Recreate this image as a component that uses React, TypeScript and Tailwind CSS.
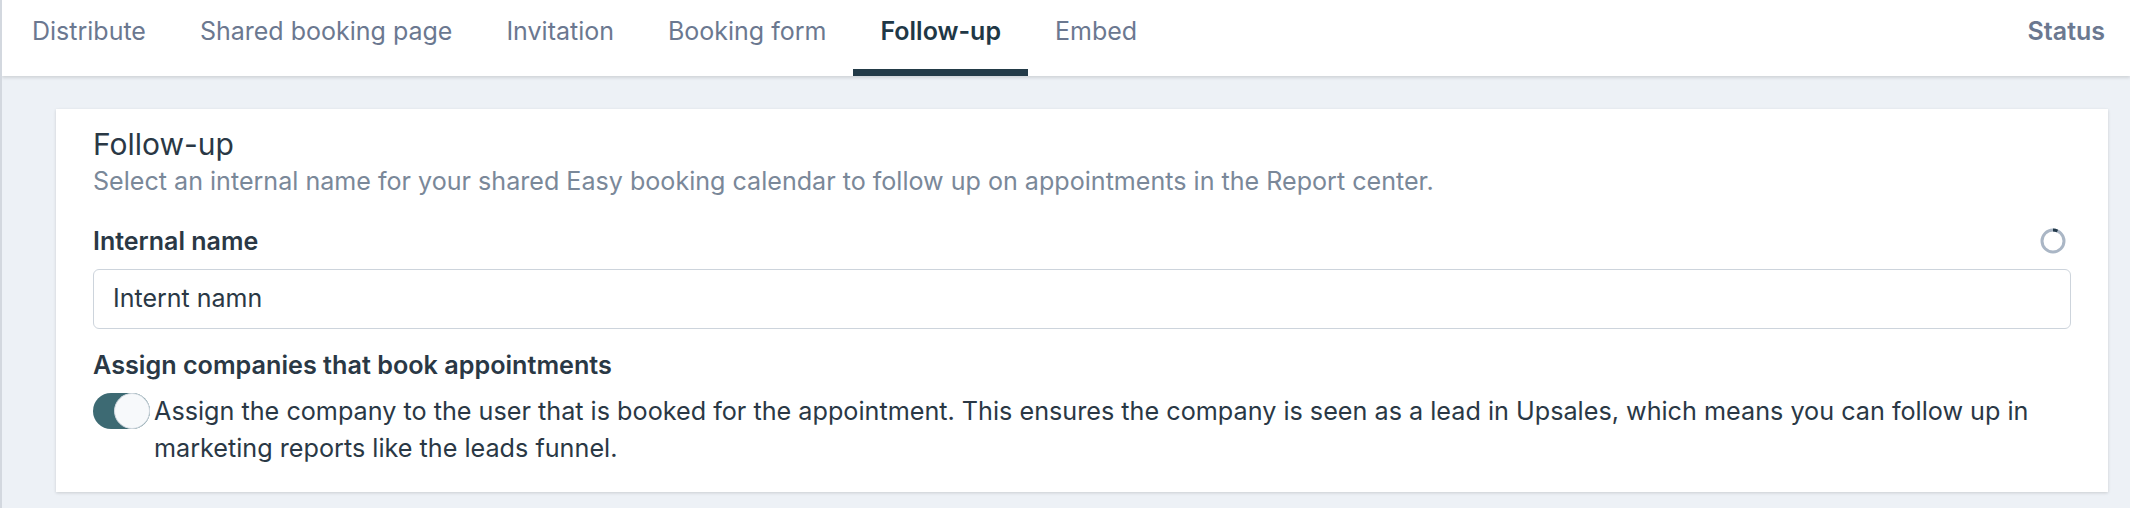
import React from 'react'

const tabs = ['Distribute', 'Shared booking page', 'Invitation', 'Booking form', 'Follow-up', 'Embed']

function Spinner() {
  return (
    <svg width="28" height="28" viewBox="0 0 28 28" className="block">
      <circle cx="14" cy="14" r="11" fill="none" stroke="#aab6c5" strokeWidth="3" />
      <path d="M14 3 A11 11 0 0 1 18.5 4" fill="none" stroke="#22394a" strokeWidth="3" />
    </svg>
  )
}

function Toggle() {
  return (
    <div className="relative h-[36px] w-[57px] shrink-0 rounded-full bg-[#3d6a73]">
      <div className="absolute right-0 top-0 h-[36px] w-[36px] rounded-full border border-[#d3dae1] bg-[#f7f9fb]" />
    </div>
  )
}

export default function App() {
  return (
    <div
      className="h-[508px] w-[2130px] overflow-hidden border-l-2 border-[#d3d8df] bg-[#edf1f6]"
      style={{ fontFamily: 'Inter, "Noto Sans", sans-serif' }}
    >
      {/* tab bar */}
      <div className="flex h-[76px] items-stretch bg-white pl-[3px] pr-[25px] shadow-[0_2px_3px_rgba(0,0,0,0.12)]">
        {tabs.map((t) => {
          const active = t === 'Follow-up'
          return (
            <div
              key={t}
              className={
                active
                  ? 'relative flex items-center px-[27px] pb-[12px] text-[25px] font-semibold text-[#1f3846]'
                  : 'relative flex items-center px-[27px] pb-[12px] text-[25px] text-[#6b7890]'
              }
            >
              {t}
              {active && <div className="absolute bottom-0 left-0 right-0 h-[7px] bg-[#233b48]" />}
            </div>
          )
        })}
        <div className="ml-auto flex items-center pb-[12px] text-[25px] font-semibold text-[#6b7890]">Status</div>
      </div>

      {/* card */}
      <div className="ml-[54px] mr-[22px] mt-[33px] bg-white px-[37px] pb-[25px] pt-[17px] shadow-[0_1px_3px_rgba(0,0,0,0.15)]">
        <h2 className="text-[30px] leading-[36px] text-[#2a3845]">Follow-up</h2>
        <p className="mt-[4px] text-[25.1px] leading-[30px] text-[#7a8899]">
          Select an internal name for your shared Easy booking calendar to follow up on appointments in the Report center.
        </p>

        <div className="mt-[30px] flex items-center justify-between">
          <span className="text-[25px] font-semibold leading-[30px] text-[#2a3845]">Internal name</span>
          <div className="mr-[4px]">
            <Spinner />
          </div>
        </div>
        <div className="mt-[13px] flex h-[60px] items-center rounded-[6px] border border-[#cdd4dc] px-[19px] text-[25px] text-[#2a3845]">
          Internt namn
        </div>

        <div className="mt-[21px] text-[25.2px] font-semibold leading-[30px] text-[#2a3845]">
          Assign companies that book appointments
        </div>
        <div className="mt-[13px] flex items-start gap-[4px]">
          <Toggle />
          <p className="text-[25.2px] leading-[37px] text-[#2a3845]">
            Assign the company to the user that is booked for the appointment. This ensures the company is seen as a lead in Upsales, which means you can follow up in
            <br />
            marketing reports like the leads funnel.
          </p>
        </div>
      </div>
    </div>
  )
}
